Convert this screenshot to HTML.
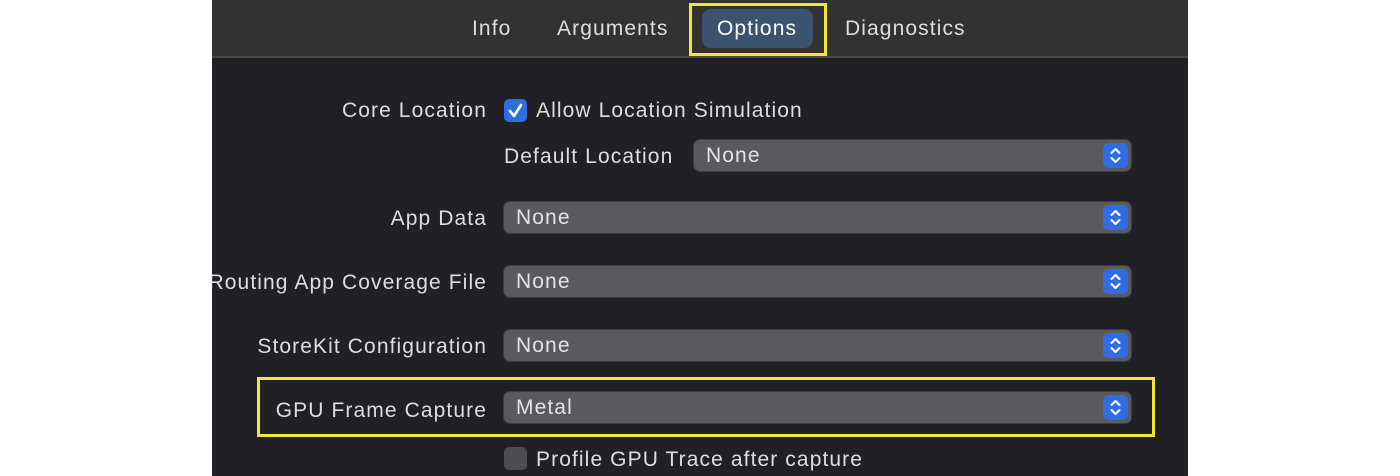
<!DOCTYPE html><html><head><style>
body{margin:0;width:1400px;height:476px;background:#fff;position:relative;overflow:hidden;font-family:"Liberation Sans",sans-serif;}
.win{position:absolute;left:212px;top:0;width:976px;height:476px;background:#212024;}
.bar{position:absolute;left:212px;top:0;width:976px;height:56px;background:#323232;border-bottom:2px solid #4a4a4a;}
.t{position:absolute;font-size:21px;letter-spacing:1.1px;color:#dedede;white-space:nowrap;line-height:24px;}
.r{text-align:right;}
.pop{position:absolute;height:31px;background:#5a595c;border-radius:6px;box-shadow:0 0 0 1px #3d3c40;}
.pop span{position:absolute;left:12px;top:4px;font-size:21px;letter-spacing:1.1px;color:#e4e4e4;line-height:24px;}
.pop i{position:absolute;right:3px;top:3px;width:25px;height:25px;background:#2f6ee0;border-radius:5px;}
.pop i svg{position:absolute;left:0;top:0;}
.yb{position:absolute;border:3px solid #f2e63a;}
.mask{position:absolute;left:0;top:0;width:212px;height:476px;background:#fff;}
</style></head><body>
<div class="win"></div><div class="bar"></div>
<div style="position:absolute;left:702px;top:9px;width:111px;height:39px;background:#3b536f;border-radius:9px"></div>
<div class="t" style="left:472px;top:17px">Info</div>
<div class="t" style="left:557px;top:17px">Arguments</div>
<div class="t" style="left:717px;top:17px;color:#fff">Options</div>
<div class="t" style="left:845px;top:17px">Diagnostics</div>
<div class="yb" style="left:689px;top:3px;width:132px;height:47px"></div>

<div class="t r" style="right:913px;top:99px">Core Location</div>
<div style="position:absolute;left:504px;top:99px;width:23px;height:23px;background:#2f6ee0;border-radius:5px"><svg width="23" height="23"><path d="M6 12l4 5 7-11" stroke="#fff" stroke-width="2.6" fill="none" stroke-linecap="round" stroke-linejoin="round"/></svg></div>
<div class="t" style="left:536px;top:99px">Allow Location Simulation</div>
<div class="t" style="left:504px;top:145px">Default Location</div>

<div class="t r" style="right:913px;top:207px">App Data</div>
<div class="t r" style="right:913px;top:271px">Routing App Coverage File</div>
<div class="t r" style="right:913px;top:335px">StoreKit Configuration</div>
<div class="t r" style="right:913px;top:399px">GPU Frame Capture</div>
<div class="mask"></div>

<div class="pop" style="left:694px;top:140px;width:437px"><span>None</span><i><svg width="25" height="25"><path d="M8.5 10l4-4 4 4M8.5 15l4 4 4-4" stroke="#fff" stroke-width="2" fill="none" stroke-linecap="round" stroke-linejoin="round"/></svg></i></div>
<div class="pop" style="left:504px;top:202px;width:627px"><span>None</span><i><svg width="25" height="25"><path d="M8.5 10l4-4 4 4M8.5 15l4 4 4-4" stroke="#fff" stroke-width="2" fill="none" stroke-linecap="round" stroke-linejoin="round"/></svg></i></div>
<div class="pop" style="left:504px;top:266px;width:627px"><span>None</span><i><svg width="25" height="25"><path d="M8.5 10l4-4 4 4M8.5 15l4 4 4-4" stroke="#fff" stroke-width="2" fill="none" stroke-linecap="round" stroke-linejoin="round"/></svg></i></div>
<div class="pop" style="left:504px;top:330px;width:627px"><span>None</span><i><svg width="25" height="25"><path d="M8.5 10l4-4 4 4M8.5 15l4 4 4-4" stroke="#fff" stroke-width="2" fill="none" stroke-linecap="round" stroke-linejoin="round"/></svg></i></div>
<div class="pop" style="left:504px;top:392px;width:627px"><span>Metal</span><i><svg width="25" height="25"><path d="M8.5 10l4-4 4 4M8.5 15l4 4 4-4" stroke="#fff" stroke-width="2" fill="none" stroke-linecap="round" stroke-linejoin="round"/></svg></i></div>
<div class="yb" style="left:257px;top:377px;width:892px;height:54px"></div>

<div style="position:absolute;left:504px;top:447px;width:23px;height:23px;background:#4e4d51;border-radius:5px"></div>
<div class="t" style="left:536px;top:448px">Profile GPU Trace after capture</div>
</body></html>
